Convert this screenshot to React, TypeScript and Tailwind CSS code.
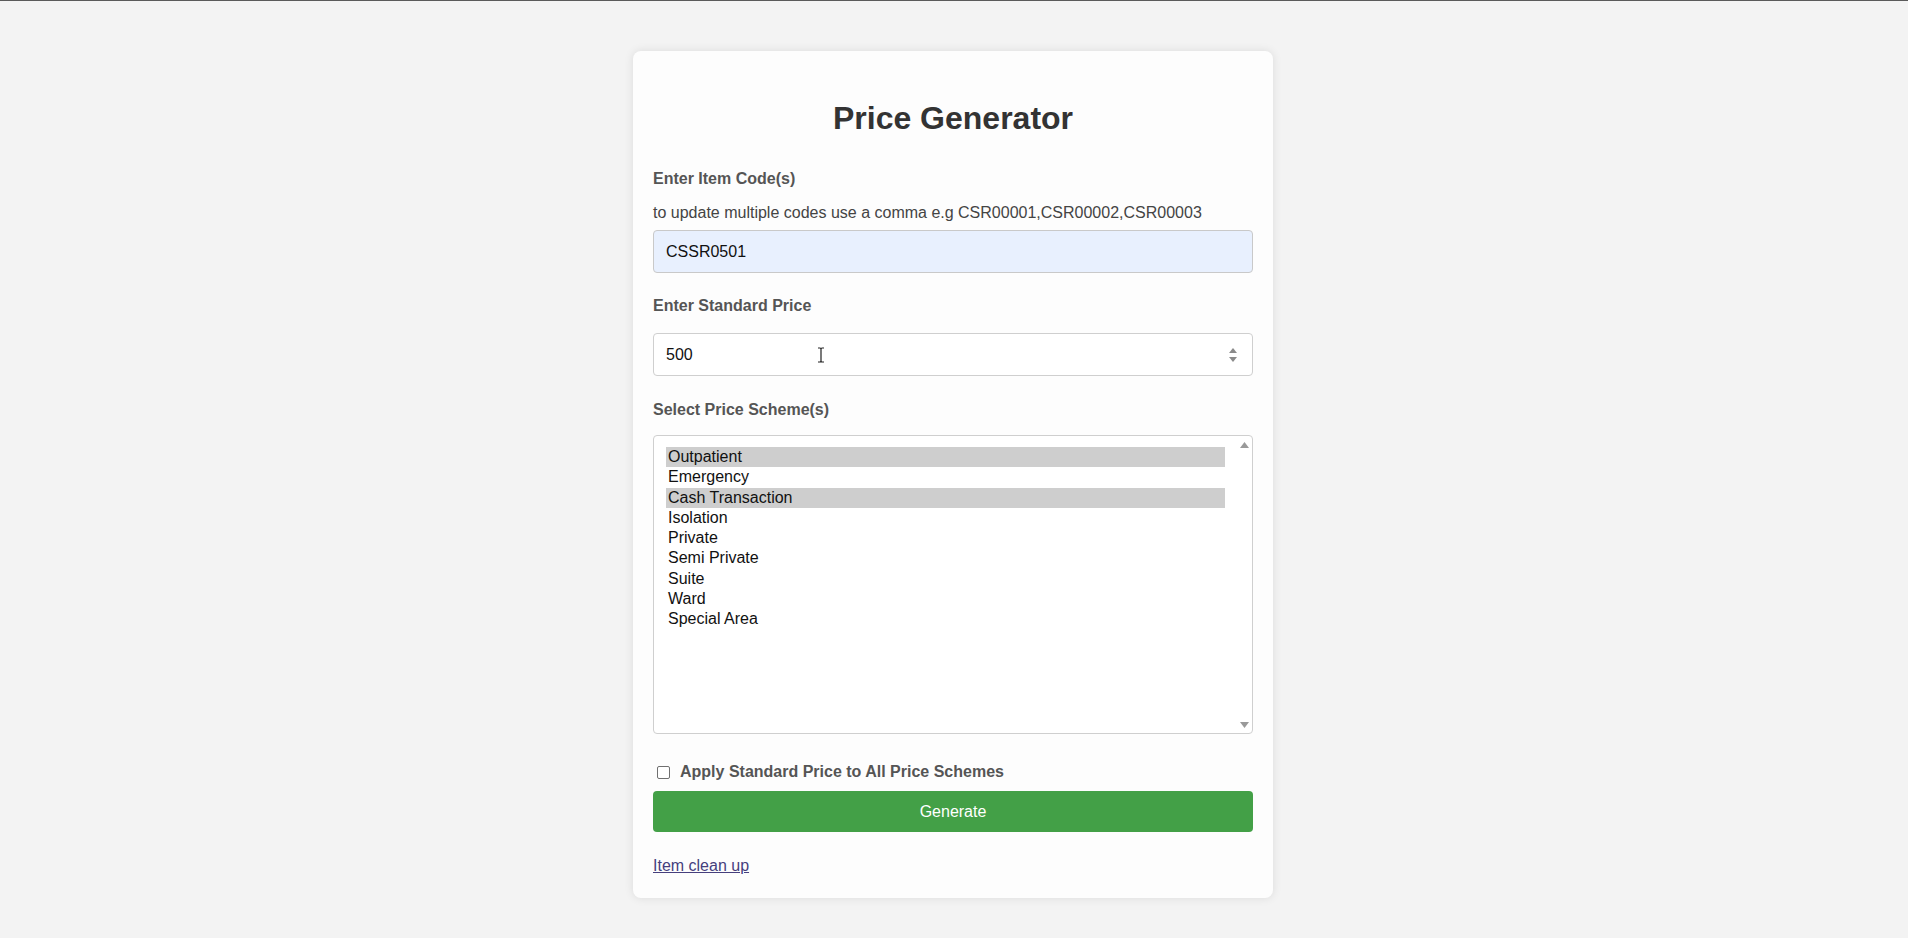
import React from "react";

const options = [
  { label: "Outpatient", selected: true },
  { label: "Emergency", selected: false },
  { label: "Cash Transaction", selected: true },
  { label: "Isolation", selected: false },
  { label: "Private", selected: false },
  { label: "Semi Private", selected: false },
  { label: "Suite", selected: false },
  { label: "Ward", selected: false },
  { label: "Special Area", selected: false },
];

export default function App() {
  return (
    <div
      className="min-h-[938px] bg-[#f3f3f3] border-t border-[#5a5a5a] pt-[50px] pb-[40px] pr-[2px]"
      style={{ fontFamily: '"Liberation Sans", Arial, sans-serif' }}
    >
      <div className="mx-auto w-[640px] rounded-lg bg-[#fdfdfd] shadow-[0_0_10px_rgba(0,0,0,0.10)] px-5 pt-[47px] pb-[22px] flex flex-col">
        <h1 className="text-[32px] leading-[40px] font-bold text-[#333] text-center">
          Price Generator
        </h1>

        <div className="mt-[31px] text-[16px] leading-[20px] font-bold text-[#555]">
          Enter Item Code(s)
        </div>
        <div className="mt-[14px] text-[16px] leading-[20px] text-[#444]">
          to update multiple codes use a comma e.g CSR00001,CSR00002,CSR00003
        </div>
        <div className="mt-[7px] h-[43px] rounded-[4px] border border-[#c9c9c9] bg-[#e8f0fe] px-3 flex items-center text-[16px] text-[#111]">
          CSSR0501
        </div>

        <div className="mt-[23px] text-[16px] leading-[20px] font-bold text-[#555]">
          Enter Standard Price
        </div>
        <div className="relative mt-[17px] h-[43px] rounded-[4px] border border-[#cfcfcf] bg-white pl-3 pr-[14px] flex items-center text-[16px] text-[#111]">
          <span className="flex-1">500</span>
          <svg width="10" height="16" viewBox="0 0 10 16" className="text-[#8a8a8a]">
            <path d="M5 1 L9 6 L1 6 Z" fill="currentColor" />
            <path d="M1 10 L9 10 L5 15 Z" fill="currentColor" />
          </svg>
          <svg
            width="8"
            height="16"
            viewBox="0 0 8 16"
            className="absolute left-[163px] top-[13px]"
          >
            <path
              d="M1 1 H3 Q4 1 4 2.5 Q4 1 5 1 H7 M4 2.5 V13.5 M1 15 H3 Q4 15 4 13.5 Q4 15 5 15 H7"
              stroke="#222"
              strokeWidth="1.2"
              fill="none"
            />
          </svg>
        </div>

        <div className="mt-[24px] text-[16px] leading-[20px] font-bold text-[#555]">
          Select Price Scheme(s)
        </div>
        <div className="mt-[15px] h-[299px] rounded-[4px] border border-[#cfcfcf] bg-white flex">
          <div className="flex-1 pl-3 pr-3 pt-[11px] flex flex-col">
            {options.map((o) => (
              <div
                key={o.label}
                className={`h-[20.3px] leading-[20.3px] px-[2px] text-[16px] text-[#111] ${
                  o.selected ? "bg-[#cecece]" : ""
                }`}
              >
                {o.label}
              </div>
            ))}
          </div>
          <div className="w-[15px] flex flex-col justify-between items-center pt-[6px] pb-[5px]">
            <svg width="9" height="6" viewBox="0 0 9 6">
              <path d="M4.5 0 L9 6 L0 6 Z" fill="#9a9a9a" />
            </svg>
            <svg width="9" height="6" viewBox="0 0 9 6">
              <path d="M0 0 L9 0 L4.5 6 Z" fill="#9a9a9a" />
            </svg>
          </div>
        </div>

        <div className="mt-[28px] h-[20px] flex items-center text-[16px] font-bold text-[#555]">
          <span className="ml-[4px] w-[13px] h-[13px] rounded-[2px] border border-[#707070] bg-white" />
          <span className="ml-[10px]">Apply Standard Price to All Price Schemes</span>
        </div>

        <div className="mt-[9px] h-[41px] rounded-[4px] bg-[#43a047] flex items-center justify-center text-[16px] text-white">
          Generate
        </div>

        <div className="mt-[24px] text-[16px] leading-[20px]">
          <a href="#" className="text-[#463f7d] underline">
            Item clean up
          </a>
        </div>
      </div>
    </div>
  );
}
